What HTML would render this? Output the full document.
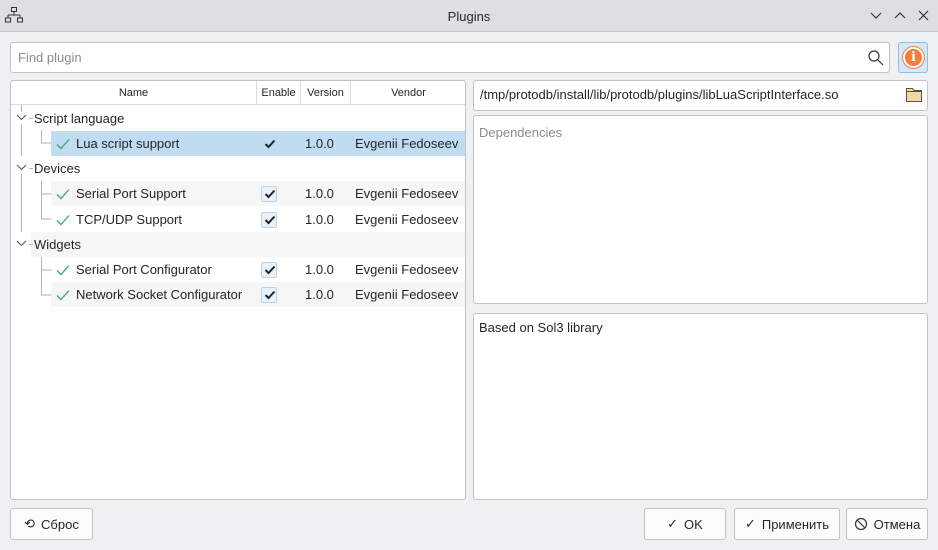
<!DOCTYPE html>
<html><head><meta charset="utf-8"><style>
*{box-sizing:border-box;margin:0;padding:0}
body{width:938px;height:550px;background:#eff0f1;font-family:"Liberation Sans","DejaVu Sans",sans-serif;font-size:13px;color:#232629;position:relative;overflow:hidden}
.abs{position:absolute}
.title{left:0;top:0;width:938px;height:32px;background:#dedfe0;border-bottom:1px solid #c4c5c6}
.field{background:#fff;border:1px solid #c0c2c4;border-radius:3px}
.btn{background:#fcfcfc;border:1px solid #c0c2c4;border-radius:3px;display:flex;align-items:center;justify-content:center;gap:6px}
.row{position:absolute;left:0;height:25px;line-height:25px}
.cb{position:absolute;left:250px;top:5px;width:16px;height:16px;border:1px solid #b8d3ea;background:#e9f2fa;border-radius:2px}
.cell{position:absolute}
.ck{position:absolute;left:252px;top:7px}
.gk{position:absolute;left:45px;top:7px}
.hd{position:absolute;top:0;height:24px;line-height:24px;font-size:11px;text-align:center;border-right:1px solid #dcdcdc}
</style></head><body>
<div class="abs title"></div>
<svg class="abs" style="left:4px;top:6px" width="20" height="18" viewBox="0 0 20 18" fill="none" stroke="#333" stroke-width="1"><rect x="7.5" y="1.5" width="5" height="4"/><path d="M10 5.5V9M4 9H16M4 9v3M16 9v3"/><rect x="1.5" y="12" width="5" height="4"/><rect x="13.5" y="12" width="5" height="4"/></svg>
<div class="abs" style="left:0;width:938px;top:9px;text-align:center;font-size:13px">Plugins</div>
<svg class="abs" style="left:866px;top:8px" width="66" height="16" viewBox="0 0 66 16" fill="none" stroke="#333" stroke-width="1.2"><path d="M5 5l5 5 5-5M29 10l5-5 5 5M53 3l9 9M62 3l-9 9"/></svg>

<div class="abs field" style="left:10px;top:42px;width:880px;height:31px"></div>
<div class="abs" style="left:18px;top:50px;color:#8a8c8e">Find plugin</div>
<svg class="abs" style="left:867px;top:49px" width="18" height="18" viewBox="0 0 18 18" fill="none" stroke="#333" stroke-width="1.2"><circle cx="7" cy="7" r="5"/><path d="M11 11l5 5"/></svg>
<div class="abs" style="left:898px;top:42px;width:30px;height:31px;background:#d6e8f6;border:1px solid #8fbfe4;border-radius:3px"></div>
<div class="abs" style="left:903px;top:47px;width:21px;height:21px;border-radius:50%;background:#f67e3c;border:2px solid #fff;box-shadow:0 0 0 1px #f67e3c;color:#fff;font-weight:bold;font-size:13px;text-align:center;line-height:17px;font-family:'DejaVu Serif',serif">i</div>

<svg width="0" height="0" style="position:absolute"><defs>
<symbol id="ck" viewBox="0 0 12 10"><path d="M1.5 5l3 3 6-6.5" fill="none" stroke="#232629" stroke-width="2"/></symbol>
<symbol id="gk" viewBox="0 0 14 12"><path d="M1 6.5l4 4 8-9" fill="none" stroke="#3daa5c" stroke-width="1.3"/></symbol>
</defs></svg>

<div class="abs field" style="left:10px;top:80px;width:456px;height:420px;overflow:hidden">
 <div class="hd" style="left:0;width:246px">Name</div>
 <div class="hd" style="left:246px;width:44px">Enable</div>
 <div class="hd" style="left:290px;width:50px">Version</div>
 <div class="hd" style="left:340px;width:115px;border-right:0">Vendor</div>
 <div class="abs" style="left:0;top:23px;width:456px;border-top:1px solid #dcdcdc"></div>
 <div style="position:absolute;left:0;top:24px;width:456px;height:283px">
  <div class="row" style="top:26px;left:40px;width:415px;background:#bfdcf1"></div>
  <div class="row" style="top:76px;left:40px;width:415px;background:#f6f6f6"></div>
  <div class="row" style="top:127px;left:20px;width:435px;background:#f6f6f6"></div>
  <div class="row" style="top:177px;left:40px;width:415px;background:#f6f6f6"></div>
  <svg class="abs" style="left:0;top:0" width="60" height="283" fill="none" stroke="#b0b2b4" stroke-width="1">
   <path d="M10.5 0v7M10.5 19v32M10.5 69v58M18 13.5h4M18 63.5h4M18 139.5h4"/>
   <path d="M30.5 25v13h10M30.5 76v13h10M30.5 89v25h10M30.5 152v13h10M30.5 165v25h10"/>
   <path d="M6 10l4.5 4.5 4.5-4.5M6 60l4.5 4.5 4.5-4.5M6 136l4.5 4.5 4.5-4.5" stroke="#555"/>
  </svg>
  <div class="row" style="top:1px;left:23px">Script language</div>
  <div class="row" style="top:51px;left:23px">Devices</div>
  <div class="row" style="top:127px;left:23px">Widgets</div>
  <div class="row" style="top:26px;left:0;width:456px"><svg class="gk" width="14" height="12"><use href="#gk"/></svg><span class="cell" style="left:65px">Lua script support</span><svg class="ck" style="left:253px;top:8px" width="12" height="10"><use href="#ck"/></svg><span class="cell" style="left:294px">1.0.0</span><span class="cell" style="left:344px">Evgenii Fedoseev</span></div>
  <div class="row" style="top:76px;left:0;width:456px"><svg class="gk" width="14" height="12"><use href="#gk"/></svg><span class="cell" style="left:65px">Serial Port Support</span><span class="cb"></span><svg class="ck" style="left:253px;top:8px" width="12" height="10"><use href="#ck"/></svg><span class="cell" style="left:294px">1.0.0</span><span class="cell" style="left:344px">Evgenii Fedoseev</span></div>
  <div class="row" style="top:102px;left:0;width:456px"><svg class="gk" width="14" height="12"><use href="#gk"/></svg><span class="cell" style="left:65px">TCP/UDP Support</span><span class="cb"></span><svg class="ck" style="left:253px;top:8px" width="12" height="10"><use href="#ck"/></svg><span class="cell" style="left:294px">1.0.0</span><span class="cell" style="left:344px">Evgenii Fedoseev</span></div>
  <div class="row" style="top:152px;left:0;width:456px"><svg class="gk" width="14" height="12"><use href="#gk"/></svg><span class="cell" style="left:65px">Serial Port Configurator</span><span class="cb"></span><svg class="ck" style="left:253px;top:8px" width="12" height="10"><use href="#ck"/></svg><span class="cell" style="left:294px">1.0.0</span><span class="cell" style="left:344px">Evgenii Fedoseev</span></div>
  <div class="row" style="top:177px;left:0;width:456px"><svg class="gk" width="14" height="12"><use href="#gk"/></svg><span class="cell" style="left:65px">Network Socket Configurator</span><span class="cb"></span><svg class="ck" style="left:253px;top:8px" width="12" height="10"><use href="#ck"/></svg><span class="cell" style="left:294px">1.0.0</span><span class="cell" style="left:344px">Evgenii Fedoseev</span></div>
 </div>
</div>

<div class="abs field" style="left:473px;top:80px;width:455px;height:31px"></div>
<div class="abs" style="left:480px;top:87px">/tmp/protodb/install/lib/protodb/plugins/libLuaScriptInterface.so</div>
<svg class="abs" style="left:905px;top:86px" width="18" height="17" viewBox="0 0 18 17"><path d="M1.5 2.5h6l1.5 2h7.5v11h-15z" fill="#f1d9a6" stroke="#5e5343"/><path d="M1.5 5.5h15" stroke="#5e5343"/></svg>
<div class="abs field" style="left:473px;top:115px;width:455px;height:189px"></div>
<div class="abs" style="left:479px;top:125px;color:#8a8c8e">Dependencies</div>
<div class="abs field" style="left:473px;top:313px;width:455px;height:187px"></div>
<div class="abs" style="left:479px;top:320px">Based on Sol3 library</div>

<div class="abs btn" style="left:10px;top:508px;width:83px;height:32px"><span>⟲</span>Сброс</div>
<div class="abs btn" style="left:644px;top:508px;width:82px;height:32px"><span>✓</span>OK</div>
<div class="abs btn" style="left:734px;top:508px;width:106px;height:32px"><span>✓</span>Применить</div>
<div class="abs btn" style="left:846px;top:508px;width:82px;height:32px"><svg width="14" height="14" viewBox="0 0 14 14" fill="none" stroke="#333" stroke-width="1.2"><circle cx="7" cy="7" r="5.5"/><path d="M3 3l8 8"/></svg>Отмена</div>
</body></html>
